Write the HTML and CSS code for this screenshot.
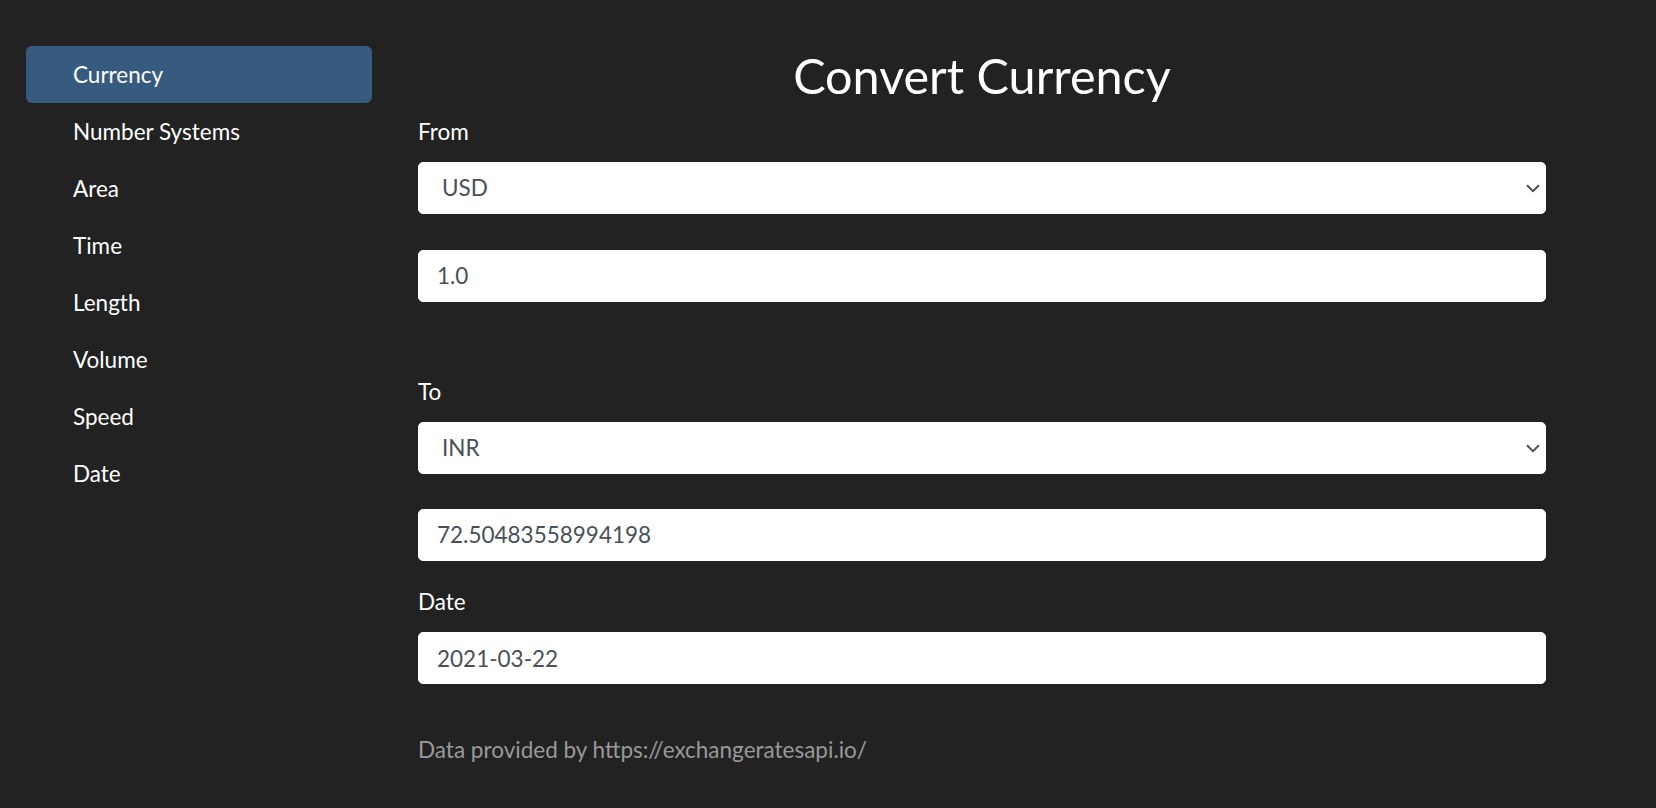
FILE: index.html
```html
<!DOCTYPE html>
<html lang="en">
<head>
<meta charset="utf-8">
<title>Convert Currency</title>
<link rel="stylesheet" href="styles.css">
</head>
<body>
<div class="layout">
  <nav class="sidebar">
    <a class="nav-link active" href="#">Currency</a>
    <a class="nav-link" href="#">Number Systems</a>
    <a class="nav-link" href="#">Area</a>
    <a class="nav-link" href="#">Time</a>
    <a class="nav-link" href="#">Length</a>
    <a class="nav-link" href="#">Volume</a>
    <a class="nav-link" href="#">Speed</a>
    <a class="nav-link" href="#">Date</a>
  </nav>
  <main class="main">
    <h1 class="title">Convert Currency</h1>
    <div class="group group-from">
      <label class="label">From</label>
      <div class="select-wrap">
        <select class="control select"><option>USD</option></select>
        <svg class="chevron" width="14" height="9" viewBox="0 0 14 9"><path d="M1 1.2 L7 7.2 L13 1.2" fill="none" stroke="#505050" stroke-width="2"/></svg>
      </div>
      <input class="control input amount" type="text" value="1.0">
    </div>
    <div class="group group-to">
      <label class="label">To</label>
      <div class="select-wrap">
        <select class="control select"><option>INR</option></select>
        <svg class="chevron" width="14" height="9" viewBox="0 0 14 9"><path d="M1 1.2 L7 7.2 L13 1.2" fill="none" stroke="#505050" stroke-width="2"/></svg>
      </div>
      <input class="control input amount amount-to" type="text" value="72.50483558994198">
    </div>
    <div class="group group-date">
      <label class="label label-date">Date</label>
      <input class="control input" type="text" value="2021-03-22">
    </div>
    <p class="credit">Data provided by https://exchangeratesapi.io/</p>
  </main>
</div>
</body>
</html>
```

FILE: styles.css
```css
html, body {
  margin: 0;
  padding: 0;
}
body {
  background: #222222;
  color: #ffffff;
  font-family: Lato, "Open Sans", "Liberation Sans", sans-serif;
  font-size: 22.5px;
  line-height: 1.5;
}
.layout {
  display: flex;
  align-items: flex-start;
  padding: 46px 0 0 26px;
}
.sidebar {
  width: 346px;
  display: flex;
  flex-direction: column;
  flex-shrink: 0;
}
.nav-link {
  display: block;
  padding: 12px 24px 12px 47px;
  color: #ffffff;
  text-decoration: none;
  border-radius: 6px;
  height: 33px;
}
.nav-link.active {
  background: #375a7f;
}
.main {
  margin-left: 46px;
  width: 1128px;
  display: flex;
  flex-direction: column;
}
.title {
  margin: 0 0 11px;
  font-size: 48.5px;
  font-weight: 400;
  line-height: 1.2;
  text-align: center;
}
.group {
  display: flex;
  flex-direction: column;
}
.label {
  display: block;
  margin-bottom: 13px;
}
.label-date {
  margin-bottom: 14px;
}
.group-to {
  margin-top: 73px;
}
.group-date {
  margin-top: 24px;
}
.select-wrap {
  position: relative;
}
.control {
  box-sizing: border-box;
  width: 100%;
  height: 52px;
  margin: 0;
  border: 1px solid #ffffff;
  border-radius: 5px;
  background: #ffffff;
  color: #495057;
  font-family: Lato, "Open Sans", "Liberation Sans", sans-serif;
  font-size: 22.5px;
  outline: none;
}
.select {
  -webkit-appearance: none;
  appearance: none;
  padding: 0 40px 0 23px;
}
.input {
  padding: 0 18px;
}
.amount {
  margin-top: 36px;
}
.amount-to {
  margin-top: 35px;
}
.chevron {
  position: absolute;
  right: 6px;
  top: 22px;
  pointer-events: none;
}
.credit {
  margin: 49px 0 0;
  color: #999999;
  font-size: 22.5px;
}
```
